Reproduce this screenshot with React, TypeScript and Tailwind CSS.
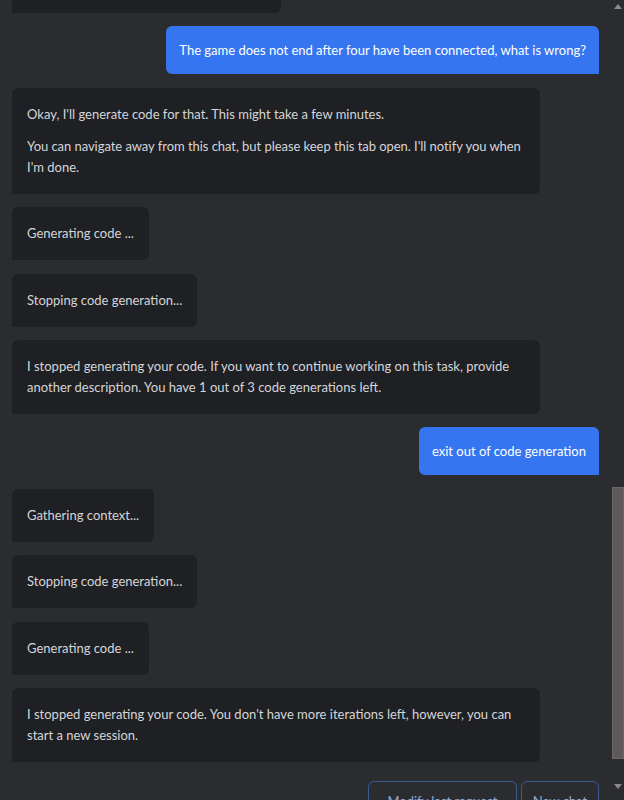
import React from "react";

function Bot({ children, wide }: { children: React.ReactNode; wide?: boolean }) {
  return (
    <div className="flex justify-start shrink-0">
      <div
        className={
          "bg-[#1f2024] text-[#d4d5d8] rounded-md rounded-bl-none px-[15px] py-4 text-[13px] leading-[21px] " +
          (wide ? "w-[528px]" : "max-w-[528px]")
        }
      >
        {children}
      </div>
    </div>
  );
}

function User({ children }: { children: React.ReactNode }) {
  return (
    <div className="flex justify-end shrink-0">
      <div className="bg-[#3575ef] text-white rounded-md rounded-br-none px-[13px] py-[13.5px] text-[13px] leading-[21px]">
        {children}
      </div>
    </div>
  );
}

export default function App() {
  return (
    <div
      className="h-[800px] w-[624px] overflow-hidden bg-[#2b2c30] flex"
      style={{ fontFamily: 'Lato, "Noto Sans", sans-serif' }}
    >
      <div className="flex-1 flex flex-col gap-[13.4px] pl-3 pr-[13px]">
        <div className="h-[13px] w-[269px] shrink-0 bg-[#1f2024] rounded-br-md" />
        <User>The game does not end after four have been connected, what is wrong?</User>
        <Bot wide>
          <p>Okay, I'll generate code for that. This might take a few minutes.</p>
          <p className="mt-[11px]">
            <span className="whitespace-nowrap tracking-[-0.05px]">
              You can navigate away from this chat, but please keep this tab open. I'll notify you when
            </span>
            <br />
            I'm done.
          </p>
        </Bot>
        <Bot>Generating code ...</Bot>
        <Bot>Stopping code generation...</Bot>
        <Bot wide>
          I stopped generating your code. If you want to continue working on this task, provide another description. You have 1 out of 3 code generations left.
        </Bot>
        <User>exit out of code generation</User>
        <Bot>Gathering context...</Bot>
        <Bot>Stopping code generation...</Bot>
        <Bot>Generating code ...</Bot>
        <Bot wide>
          I stopped generating your code. You don't have more iterations left, however, you can start a new session.
        </Bot>
        <div className="flex justify-end gap-1 mt-[6px] shrink-0">
          <button className="w-[149px] h-[40px] border border-[#3a5a94] rounded-md text-[#8fa8d6] text-[13px] leading-[21px] whitespace-nowrap overflow-hidden">
            Modify last request
          </button>
          <button className="w-[78px] h-[40px] border border-[#3a5a94] rounded-md text-[#8fa8d6] text-[13px] leading-[21px] whitespace-nowrap overflow-hidden">
            New chat
          </button>
        </div>
      </div>
      <div className="w-[12px] h-[800px] shrink-0 flex flex-col items-center">
        <div className="h-[12px] w-full flex items-center justify-center">
          <svg width="8" height="5" viewBox="0 0 8 5"><path d="M0 5 L4 0 L8 5 Z" fill="#8b8b8e" /></svg>
        </div>
        <div className="mt-[475px] h-[272px] w-full bg-[#5e595b] border border-[#6b6668]" />
        <div className="flex-1" />
        <div className="h-[12px] w-full flex items-center justify-center mb-[8px]">
          <svg width="8" height="5" viewBox="0 0 8 5"><path d="M0 0 L8 0 L4 5 Z" fill="#8b8b8e" /></svg>
        </div>
      </div>
    </div>
  );
}
